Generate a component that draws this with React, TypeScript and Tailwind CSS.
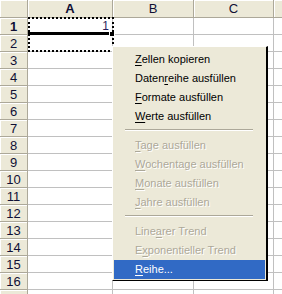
import React from "react";

const cols = [
  { label: "A", w: "w-[85px]", sel: true },
  { label: "B", w: "w-[81px]", sel: false },
  { label: "C", w: "w-[80px]", sel: false },
];

type Item = { pre: string; u: string; post: string; disabled?: boolean; active?: boolean } | "sep";

const items: Item[] = [
  { pre: "", u: "Z", post: "ellen kopieren" },
  { pre: "Daten", u: "r", post: "eihe ausfüllen" },
  { pre: "", u: "F", post: "ormate ausfüllen" },
  { pre: "", u: "W", post: "erte ausfüllen" },
  "sep",
  { pre: "", u: "T", post: "age ausfüllen", disabled: true },
  { pre: "", u: "W", post: "ochentage ausfüllen", disabled: true },
  { pre: "", u: "M", post: "onate ausfüllen", disabled: true },
  { pre: "", u: "J", post: "ahre ausfüllen", disabled: true },
  "sep",
  { pre: "Line", u: "a", post: "rer Trend", disabled: true },
  { pre: "E", u: "x", post: "ponentieller Trend", disabled: true },
  { pre: "", u: "R", post: "eihe...", active: true },
];

export default function App() {
  const rows = Array.from({ length: 17 }, (_, i) => i + 1);
  return (
    <div className="relative w-[282px] h-[294px] overflow-hidden bg-white font-['Liberation_Sans',Arial,sans-serif]">
      {/* header row */}
      <div className="flex h-[18px]">
        <div className="w-[28px] shrink-0 bg-[#ECE9D8] border-r border-b border-[#ACA899] shadow-[inset_1px_1px_0_#fff]" />
        {cols.map((c) => (
          <div
            key={c.label}
            className={`${c.w} shrink-0 bg-[#ECE9D8] border-r border-b border-[#ACA899] shadow-[inset_1px_1px_0_#fff] flex items-center justify-center text-[13px] leading-none text-[#101035] ${c.sel ? "font-bold" : ""}`}
          >
            {c.label}
          </div>
        ))}
        <div className="flex-1 bg-[#ECE9D8] border-b border-[#ACA899] shadow-[inset_1px_1px_0_#fff]" />
      </div>
      {rows.map((r) => (
        <div key={r} className="flex h-[17px]">
          <div
            className={`w-[28px] shrink-0 bg-[#ECE9D8] border-r border-b border-[#ACA899] shadow-[inset_1px_1px_0_#fff] flex items-center justify-center text-[13px] leading-none text-[#101035] ${r === 1 ? "font-bold" : ""}`}
          >
            {r}
          </div>
          <div className="w-[85px] shrink-0 border-r border-b border-[#C0C0C0] flex items-end justify-end pr-[3px] pb-[2px] text-[12px] leading-none text-[#2a1f5c]">
            {r === 1 ? "1" : ""}
          </div>
          <div className="w-[81px] shrink-0 border-r border-b border-[#C0C0C0]" />
          <div className="w-[80px] shrink-0 border-r border-b border-[#C0C0C0]" />
          <div className="flex-1 border-b border-[#C0C0C0]" />
        </div>
      ))}

      {/* active cell bottom border & fill handle */}
      <div className="absolute left-[28px] top-[32px] w-[83px] h-[3px] bg-black" />
      <div className="absolute left-[109px] top-[31px] w-[6px] h-[6px] bg-black border border-white" />
      {/* marquee */}
      <div className="absolute left-[28px] top-[17px] w-[86px] h-[35px] border-2 border-dotted border-black" />

      {/* context menu */}
      <div className="absolute left-[112px] top-[46px] w-[156px] bg-[#ECE9D8] border-t border-l border-t-white border-l-white border-r-2 border-b border-r-black border-b-black pt-[3px] pb-[1px] pl-[1px] pr-[1px] flex flex-col text-[11px] leading-none">
        {items.map((it, i) =>
          it === "sep" ? (
            <div key={i} className="h-[10px] pt-[3px] ml-[11px] mr-[12px]">
              <div className="h-px bg-[#ACA899]" />
              <div className="h-px bg-white" />
            </div>
          ) : (
            <div
              key={i}
              className={`h-[19px] flex items-center pl-[21px] whitespace-nowrap ${
                it.active
                  ? "bg-[#316AC5] text-white"
                  : it.disabled
                  ? "text-[#ACA899] [text-shadow:1px_1px_0_#fff]"
                  : "text-black"
              }`}
            >
              <span>
                {it.pre}
                <span className="underline underline-offset-[2px]">{it.u}</span>
                {it.post}
              </span>
            </div>
          )
        )}
      </div>
    </div>
  );
}
